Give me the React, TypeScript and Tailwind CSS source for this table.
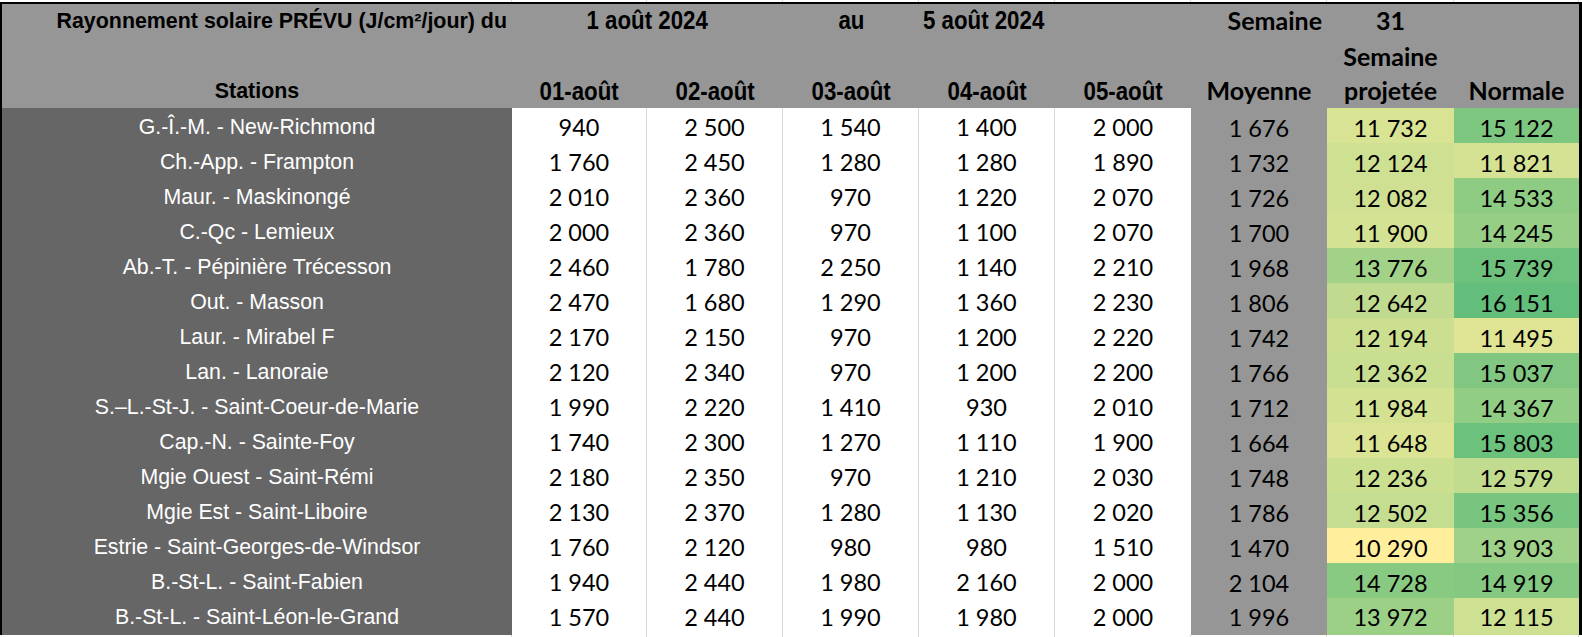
const COLS = "grid grid-cols-[510px_135px_136px_136px_136px_136px_136px_127px_125px]";
const ARIAL = "font-['Liberation_Sans',Arial,sans-serif]";
const CALIBRI = "font-['Lato',Calibri,sans-serif]";
// no Arial Narrow installed: squeeze Liberation Sans instead
const NARROW = "inline-block whitespace-nowrap scale-x-[0.84] text-[26.5px] font-bold font-['Liberation_Sans',Arial,sans-serif]";

type Row = {
  station: string;
  days: number[];
  moyenne: number;
  projetee: number;
  normale: number;
};

const rows: Row[] = [
  { station: "G.-Î.-M. - New-Richmond", days: [940, 2500, 1540, 1400, 2000], moyenne: 1676, projetee: 11732, normale: 15122 },
  { station: "Ch.-App. - Frampton", days: [1760, 2450, 1280, 1280, 1890], moyenne: 1732, projetee: 12124, normale: 11821 },
  { station: "Maur. - Maskinongé", days: [2010, 2360, 970, 1220, 2070], moyenne: 1726, projetee: 12082, normale: 14533 },
  { station: "C.-Qc - Lemieux", days: [2000, 2360, 970, 1100, 2070], moyenne: 1700, projetee: 11900, normale: 14245 },
  { station: "Ab.-T. - Pépinière Trécesson", days: [2460, 1780, 2250, 1140, 2210], moyenne: 1968, projetee: 13776, normale: 15739 },
  { station: "Out. - Masson", days: [2470, 1680, 1290, 1360, 2230], moyenne: 1806, projetee: 12642, normale: 16151 },
  { station: "Laur. - Mirabel F", days: [2170, 2150, 970, 1200, 2220], moyenne: 1742, projetee: 12194, normale: 11495 },
  { station: "Lan. - Lanoraie", days: [2120, 2340, 970, 1200, 2200], moyenne: 1766, projetee: 12362, normale: 15037 },
  { station: "S.–L.-St-J. - Saint-Coeur-de-Marie", days: [1990, 2220, 1410, 930, 2010], moyenne: 1712, projetee: 11984, normale: 14367 },
  { station: "Cap.-N. - Sainte-Foy", days: [1740, 2300, 1270, 1110, 1900], moyenne: 1664, projetee: 11648, normale: 15803 },
  { station: "Mgie Ouest - Saint-Rémi", days: [2180, 2350, 970, 1210, 2030], moyenne: 1748, projetee: 12236, normale: 12579 },
  { station: "Mgie Est - Saint-Liboire", days: [2130, 2370, 1280, 1130, 2020], moyenne: 1786, projetee: 12502, normale: 15356 },
  { station: "Estrie - Saint-Georges-de-Windsor", days: [1760, 2120, 980, 980, 1510], moyenne: 1470, projetee: 10290, normale: 13903 },
  { station: "B.-St-L. - Saint-Fabien", days: [1940, 2440, 1980, 2160, 2000], moyenne: 2104, projetee: 14728, normale: 14919 },
  { station: "B.-St-L. - Saint-Léon-le-Grand", days: [1570, 2440, 1990, 1980, 2000], moyenne: 1996, projetee: 13972, normale: 12115 },
];

const dayLabels = ["01-août", "02-août", "03-août", "04-août", "05-août"];

function fmt(n: number) {
  if (n < 1000) return String(n);
  return `${Math.floor(n / 1000)}\u00a0${String(n % 1000).padStart(3, "0")}`;
}

// two-colour scale (yellow -> green) over both weekly columns
const all = rows.flatMap((r) => [r.projetee, r.normale]);
const min = Math.min(...all);
const max = Math.max(...all);
function scale(v: number) {
  const t = (v - min) / (max - min);
  const from = [255, 239, 156];
  const to = [99, 190, 123];
  const c = from.map((f, i) => Math.round(f + (to[i] - f) * t));
  return `rgb(${c[0]}, ${c[1]}, ${c[2]})`;
}

function GridStrip() {
  return (
    <div className={`${COLS} h-[2px] pl-[2px]`}>
      {Array.from({ length: 9 }).map((_, i) => (
        <div key={i} className="border-r border-[#d9d9d9]" />
      ))}
    </div>
  );
}

export default function App() {
  return (
    <div className="w-[1582px] h-[637px] overflow-hidden bg-white text-black">
      <GridStrip />
      <div className="border-l-2 border-t-2 border-r-[3px] border-b-2 border-black">
        <div className={`${COLS} grid-rows-[34px_35px_35px] bg-[#969696]`}>
          <div className={`col-start-1 row-start-1 flex items-center justify-end whitespace-nowrap pr-[5px] text-[21.4px] font-bold ${ARIAL}`}>
            Rayonnement solaire PRÉVU (J/cm²/jour) du
          </div>
          <div className="col-start-2 col-span-2 row-start-1 flex items-center justify-center">
            <span className={NARROW}>1 août 2024</span>
          </div>
          <div className="col-start-4 row-start-1 flex items-center justify-center">
            <span className={NARROW}>au</span>
          </div>
          <div className="col-start-5 row-start-1 flex items-center pl-[4px]">
            <span className={`${NARROW} origin-left`}>5 août 2024</span>
          </div>
          <div className={`col-start-7 row-start-1 flex items-center justify-end pr-[5px] text-[25px] font-bold ${CALIBRI}`}>
            Semaine
          </div>
          <div className={`col-start-8 row-start-1 flex items-center justify-center text-[25px] font-bold ${CALIBRI}`}>
            31
          </div>
          <div className={`col-start-8 row-start-2 flex items-center justify-center pt-[3px] text-[25px] font-bold ${CALIBRI}`}>
            Semaine
          </div>
          <div className={`col-start-1 row-start-3 flex items-center justify-center pt-[2px] text-[21.4px] font-bold ${ARIAL}`}>
            Stations
          </div>
          {dayLabels.map((d, i) => (
            <div
              key={d}
              className="row-start-3 flex items-center justify-center pt-[2px]"
              style={{ gridColumnStart: i + 2 }}
            >
              <span className={NARROW}>{d}</span>
            </div>
          ))}
          <div className={`col-start-7 row-start-3 flex items-center justify-center text-[25px] font-bold ${CALIBRI}`}>
            Moyenne
          </div>
          <div className={`col-start-8 row-start-3 flex items-center justify-center text-[25px] font-bold ${CALIBRI}`}>
            projetée
          </div>
          <div className={`col-start-9 row-start-3 flex items-center justify-center text-[25px] font-bold ${CALIBRI}`}>
            Normale
          </div>
        </div>

        {rows.map((r, ri) => {
          const last = ri === rows.length - 1;
          return (
            <div key={r.station} className={`${COLS} h-[35px]`}>
              <div className={`flex items-center justify-center bg-[#666666] pt-[2px] text-[21.3px] text-white ${ARIAL}`}>
                {r.station}
              </div>
              {r.days.map((v, di) => (
                <div
                  key={di}
                  className={`flex items-center justify-center bg-white pt-[2px] text-[23.5px] ${CALIBRI} ${
                    di < 4 ? "border-r border-[#d9d9d9]" : ""
                  } ${last ? "" : "border-b border-b-[#d9d9d9]"}`}
                >
                  {fmt(v)}
                </div>
              ))}
              <div className={`flex items-center justify-center bg-[#969696] pt-[2px] text-[23.5px] ${CALIBRI}`}>
                {fmt(r.moyenne)}
              </div>
              <div
                className={`flex items-center justify-center pt-[2px] text-[23.5px] ${CALIBRI}`}
                style={{ backgroundColor: scale(r.projetee) }}
              >
                {fmt(r.projetee)}
              </div>
              <div
                className={`flex items-center justify-center pt-[2px] text-[23.5px] ${CALIBRI}`}
                style={{ backgroundColor: scale(r.normale) }}
              >
                {fmt(r.normale)}
              </div>
            </div>
          );
        })}
      </div>
      <GridStrip />
    </div>
  );
}
